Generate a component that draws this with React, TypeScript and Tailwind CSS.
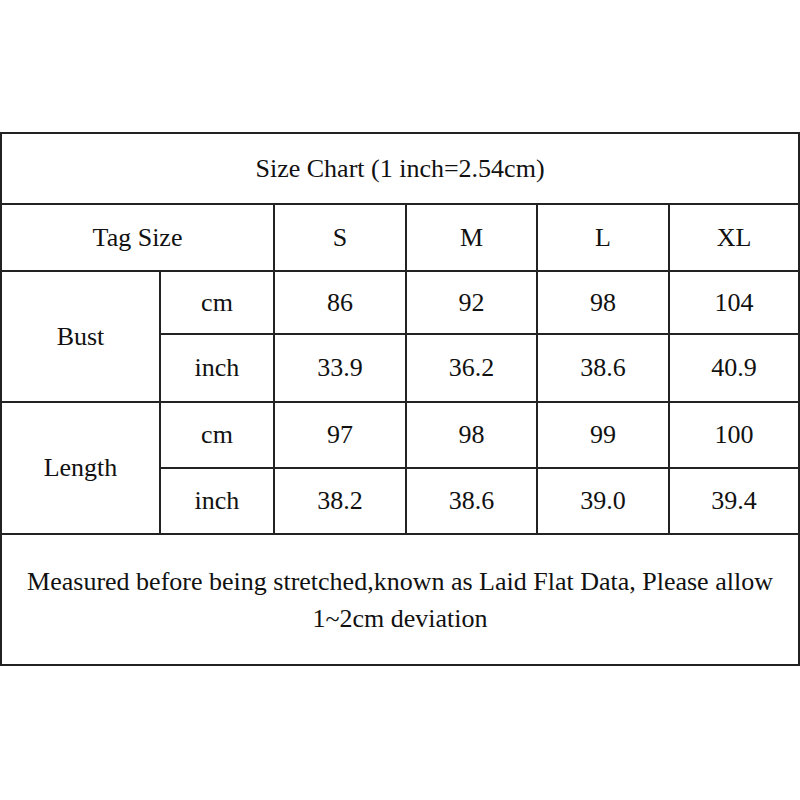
import { Fragment } from "react";

export default function App() {
  const rows = [
    { label: "Bust", cm: ["86", "92", "98", "104"], inch: ["33.9", "36.2", "38.6", "40.9"], hCm: "h-[63px]", hIn: "h-[68px]" },
    { label: "Length", cm: ["97", "98", "99", "100"], inch: ["38.2", "38.6", "39.0", "39.4"], hCm: "h-[66px]", hIn: "h-[66px]" },
  ];
  const cell = "border-2 border-[#222] text-center align-middle p-0";

  return (
    <div className="w-[800px] h-[800px] bg-white pt-[132px] text-[#111] text-[26px] leading-none [font-family:'Liberation_Serif','Times_New_Roman',serif]">
      <table className="w-[798px] table-fixed border-collapse">
        <colgroup>
          <col className="w-[159px]" />
          <col className="w-[114px]" />
          <col className="w-[132px]" />
          <col className="w-[131px]" />
          <col className="w-[132px]" />
          <col className="w-[130px]" />
        </colgroup>
        <tbody>
          <tr className="h-[71px]">
            <td colSpan={6} className={cell}>
              Size Chart (1 inch=2.54cm)
            </td>
          </tr>
          <tr className="h-[67px]">
            <td colSpan={2} className={cell}>
              Tag Size
            </td>
            <td className={cell}>S</td>
            <td className={cell}>M</td>
            <td className={cell}>L</td>
            <td className={cell}>XL</td>
          </tr>
          {rows.map((r) => (
            <Fragment key={r.label}>
              <tr className={r.hCm}>
                <td rowSpan={2} className={cell}>
                  {r.label}
                </td>
                <td className={cell}>cm</td>
                {r.cm.map((v, i) => (
                  <td key={i} className={cell}>
                    {v}
                  </td>
                ))}
              </tr>
              <tr className={r.hIn}>
                <td className={cell}>inch</td>
                {r.inch.map((v, i) => (
                  <td key={i} className={cell}>
                    {v}
                  </td>
                ))}
              </tr>
            </Fragment>
          ))}
          <tr className="h-[131px]">
            <td colSpan={6} className={cell + " px-1 leading-[37px]"}>
              Measured before being stretched,known as Laid Flat Data, Please allow
              <br />
              1~2cm deviation
            </td>
          </tr>
        </tbody>
      </table>
    </div>
  );
}
